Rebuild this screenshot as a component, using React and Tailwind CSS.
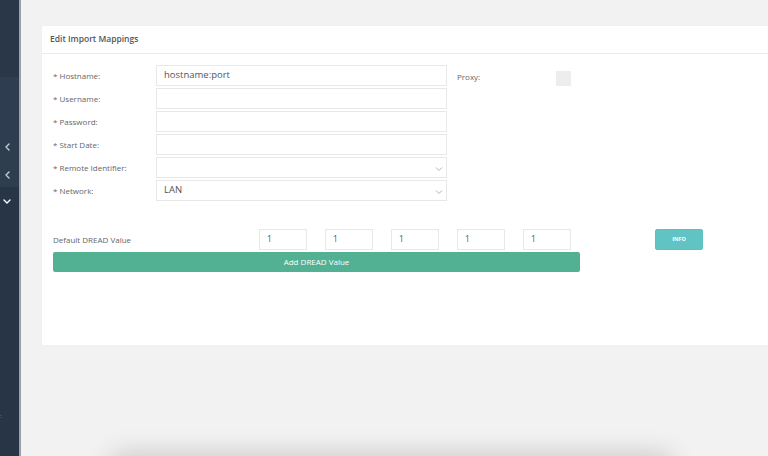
import React from "react";

const font = { fontFamily: '"Open Sans", "Liberation Sans", sans-serif' };

function Chevron({ dir = "left", className = "" }) {
  const d = dir === "left" ? "M6 2 L3 5 L6 8" : "M2 4 L5 7 L8 4";
  return (
    <svg width="10" height="10" viewBox="0 0 10 10" className={className}>
      <path d={d} fill="none" stroke="currentColor" strokeWidth="1.4" strokeLinecap="round" strokeLinejoin="round" />
    </svg>
  );
}

function Field({ value = "", select = false }) {
  return (
    <div className="relative h-[21px] border border-[#e8e8e8] bg-white flex items-center pl-[7px] text-[9.5px] text-[#555]">
      <span>{value}</span>
      {select && (
        <svg width="8" height="6" viewBox="0 0 8 6" className="absolute right-[3px] top-[8px] text-[#aaa]">
          <path d="M1 1.5 L4 4.5 L7 1.5" fill="none" stroke="currentColor" strokeWidth="0.9" />
        </svg>
      )}
    </div>
  );
}

export default function App() {
  const rows = [
    ["* Hostname:", "hostname:port", false],
    ["* Username:", "", false],
    ["* Password:", "", false],
    ["* Start Date:", "", false],
    ["* Remote Identifier:", "", true],
    ["* Network:", "LAN", true],
  ];
  return (
    <div className="flex h-[456px] w-[768px] overflow-hidden bg-[#f2f2f2]" style={font}>
      <aside className="flex w-[19px] shrink-0 flex-col bg-[#283547] text-white">
        <div className="h-[77px] bg-[#2a3749]" />
        <div className="flex h-[110px] flex-col items-center bg-[#2f3d50] pt-[65px] pr-[4px]">
          <Chevron className="text-[#c9cdd3]" />
          <Chevron className="mt-[18px] text-[#c9cdd3]" />
        </div>
        <div className="flex flex-1 flex-col items-center pt-[9px] pr-[5px]">
          <Chevron dir="down" className="text-white" />
          <div className="mt-[207px] self-start text-[6px] leading-none text-[#8a94a2]">:</div>
        </div>
      </aside>
      <div className="w-[2px] shrink-0 bg-[#9aa0a8]" />
      <main className="flex min-w-0 flex-1 flex-col pl-[20px] pt-[25px]">
        <section className="flex h-[321px] w-[760px] shrink-0 flex-col border border-[#f0f0f0] bg-white">
          <header className="flex h-[28px] shrink-0 items-center border-b border-[#ebebeb] pl-[8px] text-[8.5px] font-semibold text-[#555]">
            Edit Import Mappings
          </header>
          <div className="flex flex-col pl-[11px] pt-[11px]">
            <div className="flex">
              <div className="grid w-[394px] grid-cols-[103px_291px] gap-y-[2px]">
                {rows.map(([label, value, select]) => (
                  <React.Fragment key={label}>
                    <div className="flex h-[21px] items-center text-[8px] text-[#666]">{label}</div>
                    <Field value={value} select={select} />
                  </React.Fragment>
                ))}
              </div>
              <div className="ml-[10px] flex h-[27px] w-[114px] items-start pt-[6px]">
                <span className="text-[8px] text-[#666]">Proxy:</span>
                <div className="ml-auto h-[15px] w-[15px] bg-[#ededed]" />
              </div>
            </div>
            <div className="mt-[28px] flex h-[21px] items-center">
              <div className="w-[206px] text-[8px] text-[#666]">Default DREAD Value</div>
              <div className="flex gap-[18px]">
                {[0, 1, 2, 3, 4].map((i) => (
                  <div key={i} className="flex h-[21px] w-[48px] items-center border border-[#e8e8e8] pl-[7px] text-[8.5px] text-[#555]">
                    1
                  </div>
                ))}
              </div>
              <button className="ml-[84px] h-[21px] w-[48px] rounded-[2px] border border-[#5cc0c0] bg-[#61c3c4] text-[5.5px] font-bold text-white">
                INFO
              </button>
            </div>
            <button className="mt-[2px] h-[20px] w-[527px] rounded-[2px] bg-[#52b093] text-[8px] text-white">
              Add DREAD Value
            </button>
          </div>
        </section>
        <div className="ml-[70px] mt-[110px] h-[60px] w-[560px] shrink-0 rounded-[6px] bg-white shadow-[0_0_28px_rgba(0,0,0,0.2)]" />
      </main>
    </div>
  );
}
